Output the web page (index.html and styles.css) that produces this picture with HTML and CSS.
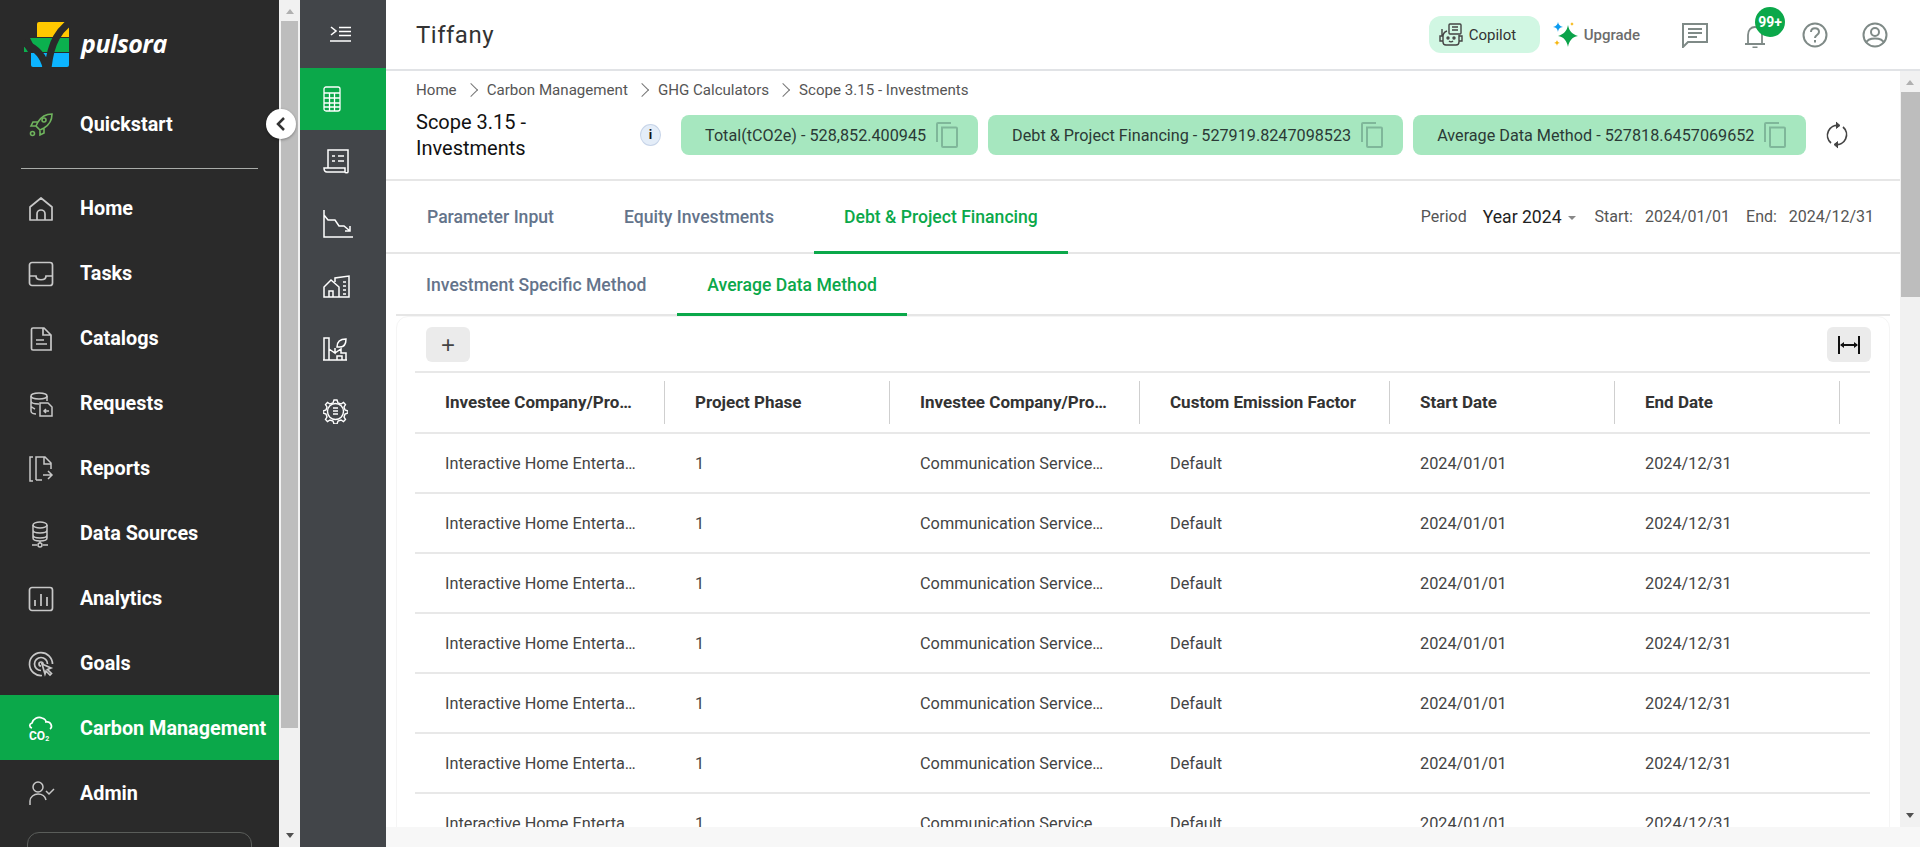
FILE: index.html
```html
<!DOCTYPE html>
<html lang="en">
  <head>
    <meta charset="utf-8" />
    <title>Pulsora - Scope 3.15 Investments</title>
    <link rel="stylesheet" href="styles.css">
  </head>

  <body>
    <div class="app">
      <aside class="sidebar">
        <div class="sidebar-nav">
          <div class="logo">
            <svg class="logo-mark" width="46" height="46" viewBox="0 0 46 46">
              <path d="M13 2a2 2 0 0 1 2-2h28a2 2 0 0 1 2 2v13H13z" fill="#ffc800"/>
              <path d="M6 16h39v14H13z" fill="#0bb04e"/>
              <path d="M0 24l4 6H0z" fill="#0bb04e"/>
              <path d="M7 31h38v12a2 2 0 0 1-2 2H9a2 2 0 0 1-2-2z" fill="#0cb4ff"/>
              <path d="M0 21C12 26 20 34 22 46M46 0C36 8 27 18 24 46" fill="none" stroke="#2a2a2a" stroke-width="7"/>
            </svg>
            <span class="logo-text">pulsora</span>
          </div>

          <a class="nav-item nav-quickstart">
            <svg class="nav-icon" viewBox="0 0 26 26" fill="none" stroke="#6fb35d" stroke-width="1.6"><path d="M24 2c-6 0-11 3-14 8l-2 4 4 4 4-2c5-3 8-8 8-14zM10 10H5l-2 4h5M16 16v5l-4 2v-5"/><circle cx="16" cy="8" r="2"/><circle cx="4.500" cy="21.500" r="2"/></svg>
            <span>Quickstart</span>
          </a>
          <div class="nav-divider"></div>

          <a class="nav-item">
            <svg class="nav-icon" viewBox="0 0 26 26" fill="none" stroke="#c8c8c8" stroke-width="1.7"><path d="M2 24V11l11-9 11 9v13zM9 24v-6a4 4 0 0 1 8 0v6" stroke-linejoin="round"/></svg>
            <span>Home</span>
          </a>
          <a class="nav-item">
            <svg class="nav-icon" viewBox="0 0 26 26" fill="none" stroke="#c8c8c8" stroke-width="1.7"><rect x="1.500" y="1.500" width="23" height="23" rx="2.500"/><path d="M2 15h6c0 5 10 5 10 0h6"/></svg>
            <span>Tasks</span>
          </a>
          <a class="nav-item">
            <svg class="nav-icon" viewBox="0 0 26 26" fill="none" stroke="#c8c8c8" stroke-width="1.7"><path d="M23 24H5a1.500 1.500 0 0 1-1.500-1.500v-19A1.500 1.500 0 0 1 5 2h11l7 7zM15 2v7h8M8 14h8M8 18h11"/></svg>
            <span>Catalogs</span>
          </a>
          <a class="nav-item">
            <svg class="nav-icon" viewBox="0 0 26 26" fill="none" stroke="#c8c8c8" stroke-width="1.500"><ellipse cx="11" cy="5" rx="8" ry="3"/><path d="M3 5v15c0 2 3 3 5 3M19 5v5M3 10c0 2 4 3 8 3M3 15c0 1 2 2 4 3"/><path d="M12 12h8l4 4v9H12zM21 20h-5M18 18l-2 2 2 2"/></svg>
            <span>Requests</span>
          </a>
          <a class="nav-item">
            <svg class="nav-icon" viewBox="0 0 26 26" fill="none" stroke="#c8c8c8" stroke-width="1.500"><path d="M5 1H2v24h3M8 24V1h9l6 6v6M16 1v7h7M8 24h6M15 19h9M20 15l4 4-4 4"/></svg>
            <span>Reports</span>
          </a>
          <a class="nav-item">
            <svg class="nav-icon" viewBox="0 0 26 26" fill="none" stroke="#c8c8c8" stroke-width="1.500"><ellipse cx="12" cy="4" rx="7" ry="3"/><path d="M5 4v13c0 2 3 3 7 3s7-1 7-3V4M5 9c0 2 3 3 7 3s7-1 7-3M5 14c0 2 3 3 7 3s7-1 7-3M12 20v2M4 24h5M15 24h5"/><circle cx="12" cy="24" r="2"/></svg>
            <span>Data Sources</span>
          </a>
          <a class="nav-item">
            <svg class="nav-icon" viewBox="0 0 26 26" fill="none" stroke="#c8c8c8" stroke-width="1.700"><rect x="1.500" y="1.500" width="23" height="23" rx="2.500"/><path d="M7 20v-6M13 20V8M19 20v-9"/></svg>
            <span>Analytics</span>
          </a>
          <a class="nav-item">
            <svg class="nav-icon" viewBox="0 0 26 26" fill="none" stroke="#c8c8c8" stroke-width="1.700"><path d="M14 24.500A11.500 11.500 0 1 1 24.500 13M13 19.500A6.500 6.500 0 1 1 19.500 13M13 15a2 2 0 1 1 2-2"/><path d="M14 13l9 4-3.500 1.500 4 4-1.500 1.500-4-4L17 23z" fill="#2a2a2a"/></svg>
            <span>Goals</span>
          </a>
          <a class="nav-item is-active">
            <svg class="nav-icon nav-icon-co2" viewBox="0 0 26 26" fill="none" stroke="#fff" stroke-width="1.700"><path d="M4 12c-3-1-3-4 0-5 1-4 6-7 10-5 3 1 4 3 4 4 5-1 7 5 4 7"/><text x="1" y="24" class="co2-text">CO<tspan class="co2-sub" dy="1">2</tspan></text></svg>
            <span>Carbon Management</span>
          </a>
          <a class="nav-item">
            <svg class="nav-icon" viewBox="0 0 26 26" fill="none" stroke="#c8c8c8" stroke-width="1.500"><circle cx="10" cy="6" r="5"/><path d="M2 24v-4c0-4 4-7 8-7s7 2 8 6M18 10l3 3 5-5"/></svg>
            <span>Admin</span>
          </a>
          <div class="nav-box"></div>
        </div>

        <div class="scrollbar scrollbar-side">
          <span class="arrow-up"></span>
          <div class="thumb"></div>
          <span class="arrow-down"></span>
        </div>

        <button class="collapse-btn">
          <svg width="12" height="14" viewBox="0 0 12 14" fill="none" stroke="#333" stroke-width="2.500"><path d="M9 1L3 7l6 6"/></svg>
        </button>
      </aside>

      <nav class="rail">
        <a class="rail-item rail-toggle">
          <svg width="21" height="16" viewBox="0 0 21 16" fill="none" stroke="#fff" stroke-width="1.600"><path d="M1 1l5 4-5 4M9 1.500h12M9 5.500h12M9 9.500h12M0 15h21"/></svg>
        </a>
        <a class="rail-item is-active">
          <svg width="18" height="26" viewBox="0 0 18 26" fill="none" stroke="#fff" stroke-width="1.300"><rect x="1" y="1" width="16" height="24" rx="2"/><path d="M1 7h16M1 12h16M1 17h16M1 21h16M6.500 7v18M11.500 7v18"/></svg>
        </a>
        <a class="rail-item">
          <svg width="26" height="25" viewBox="0 0 26 25" fill="none" stroke="#fff" stroke-width="1.500"><path d="M5 19V1h20v22c0 1-3 1-3 0v-4H1c0 2 1 4 3 4h18M9 7h3M9 12h3M15 7h6M15 12h6"/></svg>
        </a>
        <a class="rail-item">
          <svg width="30" height="28" viewBox="0 0 30 28" fill="none" stroke="#fff" stroke-width="1.500"><path d="M1 0v27h29M1 5l4 5h7l4 6h5l6 5M27 16v5h-5"/></svg>
        </a>
        <a class="rail-item">
          <svg width="27" height="23" viewBox="0 0 27 23" fill="none" stroke="#fff" stroke-width="1.500"><path d="M1 22V12l7-7 8 7v10zM6 22v-6h4v6M12 7V3l14-2v21H16M20 7h3M20 11h3M20 15h3M20 19h3"/></svg>
        </a>
        <a class="rail-item">
          <svg width="25" height="24" viewBox="0 0 25 24" fill="none" stroke="#fff" stroke-width="1.500"><path d="M1 23V1h5v22M0 23h24M6 12l6 4v-5M12 16l6-4v4h5v7M14 23v-4h5v4M14 10c0-5 3-8 9-8 0 5-2 8-6 8-1 0-2 0-3 0z"/></svg>
        </a>
        <a class="rail-item">
          <svg width="25" height="25" viewBox="0 0 25 25" fill="none" stroke="#fff" stroke-width="1.400"><circle cx="12.500" cy="12.500" r="8"/><path d="M11 1h3l1 3 3 1 2.500-1.500 2 2L21 8l1 3 3 1v2l-3 1-1 3 1.500 2.500-2 2L18 21l-3 1-1 3h-3l-1-3-3-1-2.500 1.500-2-2L4 18l-1-3-3-1v-2l3-1 1-3-1.500-2.500 2-2L7 5l3-1zM10 9h5M10 12h5M10 15h5"/></svg>
        </a>
      </nav>

      <main class="main">
        <header class="topbar">
          <div class="topbar-title">Tiffany</div>
          <div class="topbar-actions">
            <a class="copilot">
              <svg width="24" height="24" viewBox="0 0 24 24" fill="none" stroke="#444" stroke-width="1.400"><rect x="10" y="1" width="12" height="10" rx="1"/><path d="M13 4h6M13 7h6M8 8a6 6 0 0 0-4 6v5a3 3 0 0 0 3 3h10a3 3 0 0 0 3-3v-7M4 13H1v5h3M20 13h3v5h-3M3 6v7"/><circle cx="9" cy="15" r="1"/><circle cx="15" cy="15" r="1"/><path d="M10 18c1 1 3 1 4 0"/></svg>
              <span>Copilot</span>
            </a>
            <a class="upgrade">
              <svg width="26" height="26" viewBox="0 0 26 26"><path d="M15 3c1 6 4 9 10 11-6 1-9 5-10 11-1-6-4-10-10-11 6-2 9-5 10-11z" fill="#0ba34a"/><path d="M5 0c.5 2.500 1.500 4 5 5-3.500.5-4.500 2-5 5-.5-3-1.500-4.500-5-5 3.500-1 4.500-2.500 5-5z" fill="#0b9cf0"/><path d="M19 0c.3 1.200.8 1.700 2 2-1.200.3-1.700.8-2 2-.3-1.200-.8-1.700-2-2 1.200-.3 1.700-.8 2-2zM4 18c.3 1.500 1 2.200 3 3-2 .3-2.700 1-3 3-.3-2-1-2.700-3-3 2-.8 2.700-1.500 3-3z" fill="#f6b60d"/></svg>
              <span>Upgrade</span>
            </a>
            <a class="top-icon top-chat">
              <svg width="26" height="26" viewBox="0 0 26 26" fill="none" stroke="#7f8a87" stroke-width="2"><path d="M1 25V2h24v18H6zM6 7h14M6 11h14M6 15h9"/></svg>
            </a>
            <a class="top-icon top-bell">
              <svg width="22" height="26" viewBox="0 0 22 26" fill="none" stroke="#7f8a87" stroke-width="1.800"><path d="M1 22h20M4 22v-9c0-5 3-8 7-8s7 3 7 8v9M8.500 25.500h5"/></svg>
              <span class="badge">99+</span>
            </a>
            <a class="top-icon">
              <svg width="26" height="26" viewBox="0 0 26 26" fill="none" stroke="#7f8a87" stroke-width="2"><circle cx="13" cy="13" r="11.500"/><path d="M9 10c0-5 8-5 8 0 0 3-4 3-4 6M13 18v2.500"/></svg>
            </a>
            <a class="top-icon">
              <svg width="26" height="26" viewBox="0 0 26 26" fill="none" stroke="#7f8a87" stroke-width="2"><circle cx="13" cy="13" r="11.500"/><circle cx="13" cy="10" r="4"/><path d="M4 21c2-6 16-6 18 0"/></svg>
            </a>
          </div>
        </header>

        <div class="page">
          <div class="content">
            <div class="crumbs">
              <span>Home</span><i class="chev"></i>
              <span>Carbon Management</span><i class="chev"></i>
              <span>GHG Calculators</span><i class="chev"></i>
              <span>Scope 3.15 - Investments</span>
            </div>

            <div class="title-row">
              <h1 class="page-title">Scope 3.15 - Investments</h1>
              <span class="info-dot">i</span>
              <div class="pill">Total(tCO2e) - 528,852.400945<svg class="copy-icon" width="22" height="26" viewBox="0 0 22 26"><path d="M1 20V2a1 1 0 0 1 1-1h13M6 5.500h14a1 1 0 0 1 1 1V24a1 1 0 0 1-1 1H7a1 1 0 0 1-1-1z"/></svg></div>
              <div class="pill">Debt &amp; Project Financing - 527919.8247098523<svg class="copy-icon" width="22" height="26" viewBox="0 0 22 26"><path d="M1 20V2a1 1 0 0 1 1-1h13M6 5.500h14a1 1 0 0 1 1 1V24a1 1 0 0 1-1 1H7a1 1 0 0 1-1-1z"/></svg></div>
              <div class="pill">Average Data Method - 527818.6457069652<svg class="copy-icon" width="22" height="26" viewBox="0 0 22 26"><path d="M1 20V2a1 1 0 0 1 1-1h13M6 5.500h14a1 1 0 0 1 1 1V24a1 1 0 0 1-1 1H7a1 1 0 0 1-1-1z"/></svg></div>
              <svg class="refresh" width="24" height="28" viewBox="0 0 24 28" fill="none" stroke="#444" stroke-width="1.700"><path d="M14 4.500A10 10 0 0 0 6 22M10 23.500A10 10 0 0 0 18 6"/><path d="M11 1l4 3.500-4 3M13 27l-4-3.500 4-3" fill="#444" stroke-width="1"/></svg>
            </div>

            <div class="tabs">
              <a class="tab">Parameter Input</a>
              <a class="tab">Equity Investments</a>
              <a class="tab is-active">Debt &amp; Project Financing</a>
              <div class="period">
                <span class="period-label">Period</span>
                <span class="period-year">Year 2024<i class="caret"></i></span>
                <span class="period-label">Start:</span>
                <span class="period-date">2024/01/01</span>
                <span class="period-label">End:</span>
                <span class="period-date">2024/12/31</span>
              </div>
            </div>

            <div class="card">
              <div class="subtabs">
                <a class="subtab">Investment Specific Method</a>
                <a class="subtab is-active">Average Data Method</a>
              </div>
              <div class="table-box">
                <div class="toolbar">
                  <button class="tool-btn tool-plus">+</button>
                  <button class="tool-btn">
                    <svg width="24" height="18" viewBox="0 0 24 18" fill="none" stroke="#111" stroke-width="2"><path d="M2 0v18M22 0v18M4 9h16"/><path d="M7 6v6L3 9zM17 6v6l4-3z" fill="#111" stroke="none"/></svg>
                  </button>
                </div>
                <table class="grid">
                  <colgroup><col class="c-a"><col class="c-b"><col class="c-a"><col class="c-a"><col class="c-b"><col class="c-b"><col></colgroup>
                  <thead>
                    <tr>
                      <th><span>Investee Company/Project Name</span></th>
                      <th><span>Project Phase</span></th>
                      <th><span>Investee Company/Project Sector</span></th>
                      <th><span>Custom Emission Factor</span></th>
                      <th><span>Start Date</span></th>
                      <th><span>End Date</span></th>
                      <th></th>
                    </tr>
                  </thead>
                  <tbody>
                    <tr><td>Interactive Home Entertainment</td><td>1</td><td>Communication Services Sector</td><td>Default</td><td>2024/01/01</td><td>2024/12/31</td><td></td></tr>
                    <tr><td>Interactive Home Entertainment</td><td>1</td><td>Communication Services Sector</td><td>Default</td><td>2024/01/01</td><td>2024/12/31</td><td></td></tr>
                    <tr><td>Interactive Home Entertainment</td><td>1</td><td>Communication Services Sector</td><td>Default</td><td>2024/01/01</td><td>2024/12/31</td><td></td></tr>
                    <tr><td>Interactive Home Entertainment</td><td>1</td><td>Communication Services Sector</td><td>Default</td><td>2024/01/01</td><td>2024/12/31</td><td></td></tr>
                    <tr><td>Interactive Home Entertainment</td><td>1</td><td>Communication Services Sector</td><td>Default</td><td>2024/01/01</td><td>2024/12/31</td><td></td></tr>
                    <tr><td>Interactive Home Entertainment</td><td>1</td><td>Communication Services Sector</td><td>Default</td><td>2024/01/01</td><td>2024/12/31</td><td></td></tr>
                    <tr><td>Interactive Home Entertainment</td><td>1</td><td>Communication Services Sector</td><td>Default</td><td>2024/01/01</td><td>2024/12/31</td><td></td></tr>
                  </tbody>
                </table>
              </div>
            </div>
          </div>

          <div class="scrollbar scrollbar-main">
            <span class="arrow-up"></span>
            <div class="thumb"></div>
            <span class="arrow-down"></span>
          </div>
        </div>
        <div class="page-foot"></div>
      </main>
    </div>
  </body>
</html>
```

FILE: styles.css
```css
html, body {
  margin: 0;
  padding: 0;
  height: 100%;
  overflow: hidden;
  font-family: Roboto, "Liberation Sans", sans-serif;
  color: #333;
  background: #fff;
}

.app {
  display: flex;
  height: 847px;
}

/* left sidebar */
.sidebar {
  position: relative;
  display: flex;
  flex: 0 0 300px;
  background: #2a2a2a;
}

.sidebar-nav {
  flex: 0 0 279px;
  overflow: hidden;
}

.logo {
  display: flex;
  align-items: center;
  height: 92px;
  padding-left: 24px;
  padding-bottom: 3px;
  box-sizing: border-box;
}

.logo-text {
  margin-left: 11px;
  margin-bottom: 3px;
  font-family: "Open Sans", sans-serif;
  font-size: 25px;
  font-weight: 700;
  font-style: italic;
  color: #fff;
  letter-spacing: -0.5px;
}

.nav-item {
  display: flex;
  align-items: center;
  height: 65px;
  padding-left: 28px;
  padding-top: 2px;
  box-sizing: border-box;
  font-size: 19.8px;
  font-weight: 700;
  color: #fff;
}

.nav-quickstart {
  padding-top: 0;
}

.nav-icon {
  flex: 0 0 26px;
  width: 26px;
  height: 26px;
  margin-right: 26px;
  overflow: visible;
}

.co2-text {
  font-size: 12px;
  font-weight: 700;
  fill: #fff;
  stroke: none;
}

.co2-sub {
  font-size: 7px;
}

.nav-divider {
  height: 1px;
  margin: 11px 21px 6px;
  background: #a9aca9;
}

.nav-item.is-active {
  background: #0ba84a;
}

.nav-box {
  height: 40px;
  margin: 7px 27px 0;
  border: 1px solid #5a5d5a;
  border-radius: 12px;
}

.collapse-btn {
  position: absolute;
  top: 109px;
  left: 266px;
  display: flex;
  align-items: center;
  justify-content: center;
  width: 30px;
  height: 30px;
  padding: 0;
  border: 0;
  border-radius: 50%;
  background: #fff;
  box-shadow: 0 1px 3px rgba(0, 0, 0, 0.35);
}

/* scrollbars */
.scrollbar {
  display: flex;
  flex-direction: column;
  align-items: center;
  flex: 0 0 auto;
  background: #f1f1f1;
}

.scrollbar-side {
  flex-basis: 21px;
  width: 21px;
}

.scrollbar-side .thumb {
  width: 17px;
  height: 707px;
}

.scrollbar-main {
  flex-basis: 20px;
  width: 20px;
}

.scrollbar-main .thumb {
  width: 19px;
  height: 205px;
  margin-left: 1px;
}

.thumb {
  background: #bdbdbd;
}

.arrow-up,
.arrow-down {
  width: 0;
  height: 0;
  border-left: 4px solid transparent;
  border-right: 4px solid transparent;
}

.arrow-up {
  margin: 9px 0 7px;
  border-bottom: 5px solid #b0b0b0;
}

.arrow-down {
  margin-top: auto;
  margin-bottom: 9px;
  border-top: 5px solid #505050;
}

/* second rail */
.rail {
  flex: 0 0 86px;
  background: #424549;
}

.rail-item {
  display: flex;
  align-items: center;
  height: 62.5px;
  padding-left: 23px;
  box-sizing: border-box;
}

.rail-toggle {
  height: 68px;
  padding-left: 30px;
}

.rail-item.is-active {
  height: 62px;
  background: #0ba84a;
}

/* main column */
.main {
  display: flex;
  flex-direction: column;
  flex: 1;
  min-width: 0;
}

.topbar {
  display: flex;
  align-items: center;
  justify-content: space-between;
  flex: 0 0 71px;
  padding: 0 15px 0 30px;
  box-sizing: border-box;
  border-bottom: 2px solid #e1e3e6;
}

.topbar-title {
  font-size: 24px;
  color: #333;
  letter-spacing: 0.5px;
}

.topbar-actions {
  display: flex;
  align-items: center;
}

.copilot {
  display: flex;
  align-items: center;
  width: 111px;
  height: 37px;
  padding-left: 10px;
  box-sizing: border-box;
  border-radius: 12px;
  background: #d1f7e3;
  font-size: 15px;
  color: #333;
}

.copilot span {
  margin-left: 6px;
}

.upgrade {
  display: flex;
  align-items: center;
  margin-left: 13px;
  font-size: 15px;
  font-weight: 500;
  color: #6c6c6c;
}

.upgrade span {
  margin-left: 5px;
}

.top-icon {
  position: relative;
  display: flex;
  justify-content: center;
  width: 60px;
}

.top-chat {
  margin-left: 25px;
}

.badge {
  position: absolute;
  top: -15px;
  left: 30px;
  width: 30px;
  height: 30px;
  border-radius: 50%;
  background: #0ba84a;
  color: #fff;
  font-size: 14px;
  font-weight: 700;
  line-height: 30px;
  text-align: center;
}

.page {
  display: flex;
  flex: 1;
  min-height: 0;
}

.content {
  flex: 1;
  min-width: 0;
  overflow: hidden;
}

.page-foot {
  flex: 0 0 20px;
  background: #f7f7f7;
}

/* breadcrumb and title */
.crumbs {
  display: flex;
  align-items: center;
  height: 37px;
  padding-left: 30px;
  font-size: 15.1px;
  color: #555;
}

.chev {
  width: 9px;
  height: 9px;
  margin: 0 11px 0 9px;
  border-top: 1px solid #777;
  border-right: 1px solid #777;
  transform: rotate(45deg);
}

.title-row {
  display: flex;
  align-items: center;
  height: 73px;
  padding-left: 30px;
  padding-bottom: 17px;
  box-sizing: border-box;
  border-bottom: 2px solid #e6e6e6;
}

.page-title {
  flex: 0 0 190px;
  margin: 0;
  font-size: 20px;
  font-weight: 400;
  line-height: 26px;
  color: #111;
}

.info-dot {
  width: 19px;
  height: 20px;
  margin: 0 20px 0 34px;
  border: 1px solid #c7d4e8;
  border-radius: 50%;
  background: #e4edf8;
  color: #111;
  font-size: 13px;
  font-weight: 700;
  line-height: 20px;
  text-align: center;
}

.pill {
  display: flex;
  align-items: center;
  flex: 0 0 auto;
  height: 40px;
  padding: 0 20px 0 24px;
  margin-right: 10px;
  box-sizing: border-box;
  border-radius: 8px;
  background: #a6e7bf;
  font-size: 16.2px;
  color: #2b3a36;
}

.copy-icon {
  margin-left: 10px;
  fill: none;
  stroke: #7fb79a;
  stroke-width: 2;
}

.refresh {
  margin-left: 9px;
}

/* tabs */
.tabs {
  display: flex;
  align-items: stretch;
  height: 73px;
  padding-left: 11px;
  box-sizing: border-box;
  border-bottom: 2px solid #e6e6e6;
}

.tab {
  display: flex;
  align-items: center;
  padding: 0 30px;
  margin-right: 10px;
  font-size: 17.6px;
  font-weight: 500;
  color: #64748b;
}

.tab.is-active {
  padding-top: 2px;
  color: #0ba84a;
  border-bottom: 3px solid #0ba84a;
  margin-bottom: -2px;
}

.period {
  display: flex;
  align-items: center;
  margin-left: auto;
  padding-right: 26px;
  font-size: 16px;
  color: #555;
}

.period-year {
  margin: 0 19px 0 16px;
  font-size: 17.6px;
  color: #222;
}

.caret {
  display: inline-block;
  margin-left: 6px;
  border-left: 4px solid transparent;
  border-right: 4px solid transparent;
  border-top: 4px solid #888;
  vertical-align: middle;
}

.period-date {
  margin-left: 12px;
}

.period-date + .period-label {
  margin-left: 16px;
}

/* inner card */
.card {
  margin: 0 10px;
}

.subtabs {
  display: flex;
  gap: 1px;
  height: 62px;
  border-bottom: 2px solid #e6e6e6;
  box-sizing: border-box;
}

.subtab {
  display: flex;
  align-items: center;
  padding: 1px 30px 0;
  font-size: 17.6px;
  font-weight: 500;
  color: #64748b;
}

.subtab.is-active {
  padding-top: 2px;
  color: #0ba84a;
  border-bottom: 3px solid #0ba84a;
  margin-bottom: -2px;
}

.table-box {
  border: 1px solid #f5f5f5;
  border-radius: 12px;
}

.toolbar {
  display: flex;
  justify-content: space-between;
  padding: 10px 18px 9px 29px;
}

.tool-btn {
  display: flex;
  align-items: center;
  justify-content: center;
  width: 44px;
  height: 35px;
  padding: 0;
  border: 0;
  border-radius: 6px;
  background: #ebebeb;
}

.tool-plus {
  font-size: 24px;
  font-weight: 400;
  color: #444;
}

.grid {
  width: 1455px;
  margin-left: 18px;
  border-collapse: collapse;
  table-layout: fixed;
}

.c-a { width: 250px; }
.c-b { width: 225px; }

.grid th,
.grid td {
  white-space: nowrap;
  overflow: hidden;
  text-overflow: ellipsis;
  text-align: left;
  border-bottom: 2px solid #e8e8e8;
}

.grid th {
  height: 58px;
  padding: 0 0 1px;
  border-top: 2px solid #e8e8e8;
  font-size: 17px;
  font-weight: 700;
  color: #333;
}

.grid th span {
  display: block;
  height: 43px;
  padding: 0 28px 0 30px;
  border-right: 1px solid #cfcfcf;
  line-height: 43px;
  overflow: hidden;
  text-overflow: ellipsis;
}

.grid td {
  height: 58px;
  padding: 0 28px 0 30px;
  font-size: 16.3px;
  font-weight: 400;
  color: #444;
}

.grid td:nth-child(3) {
  padding-right: 32px;
}
```
